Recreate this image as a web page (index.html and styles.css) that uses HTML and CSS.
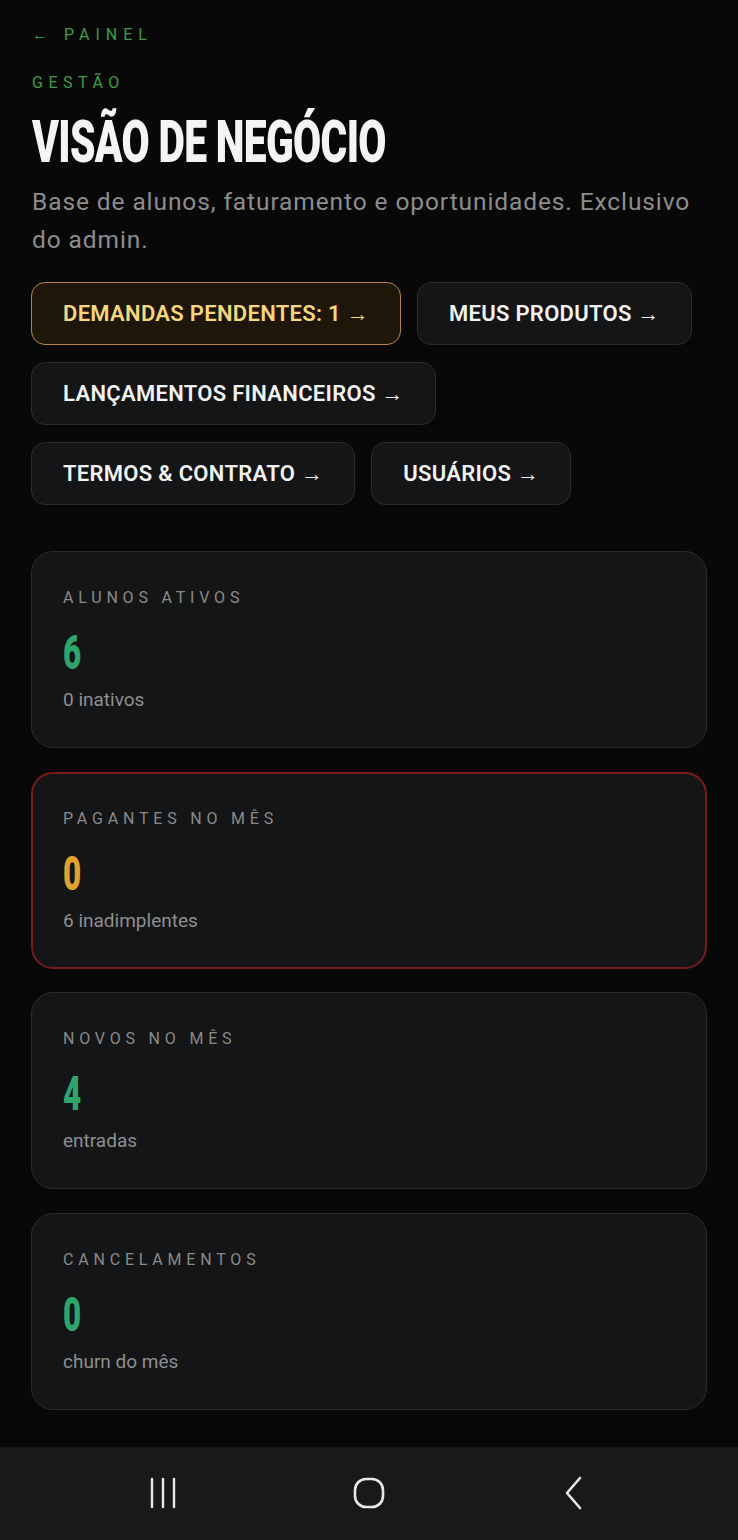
FILE: index.html
```html
<!DOCTYPE html>
<html lang="pt-BR">
<head>
  <meta charset="UTF-8">
  <title>Visão de Negócio</title>
  <link rel="stylesheet" href="styles.css">
</head>
<body>
  <div class="page">
    <a class="back" href="#">← PAINEL</a>
    <div class="eyebrow">GESTÃO</div>
    <h1><span>VISÃO DE NEGÓCIO</span></h1>
    <p class="lead">Base de alunos, faturamento e oportunidades. Exclusivo do admin.</p>

    <div class="actions">
      <a class="btn btn-warn" href="#">DEMANDAS PENDENTES: 1 →</a>
      <a class="btn" href="#">MEUS PRODUTOS →</a>
      <a class="btn" href="#">LANÇAMENTOS FINANCEIROS →</a>
      <a class="btn" href="#">TERMOS &amp; CONTRATO →</a>
      <a class="btn" href="#">USUÁRIOS →</a>
    </div>

    <div class="cards">
      <div class="card">
        <div class="card-label">ALUNOS ATIVOS</div>
        <div class="card-value green"><span>6</span></div>
        <div class="card-sub">0 inativos</div>
      </div>
      <div class="card card-alert">
        <div class="card-label">PAGANTES NO MÊS</div>
        <div class="card-value amber"><span>0</span></div>
        <div class="card-sub">6 inadimplentes</div>
      </div>
      <div class="card">
        <div class="card-label">NOVOS NO MÊS</div>
        <div class="card-value green"><span>4</span></div>
        <div class="card-sub">entradas</div>
      </div>
      <div class="card">
        <div class="card-label">CANCELAMENTOS</div>
        <div class="card-value green"><span>0</span></div>
        <div class="card-sub">churn do mês</div>
      </div>
    </div>
  </div>

  <div class="navbar">
    <svg width="34" height="34" viewBox="0 0 34 34" fill="none" stroke="#e8e8e8" stroke-width="2.4" stroke-linecap="round">
      <path d="M6 3v28M17 3v28M28 3v28"/>
    </svg>
    <svg width="34" height="34" viewBox="0 0 34 34" fill="none" stroke="#e8e8e8" stroke-width="2.6">
      <rect x="3" y="3" width="28" height="28" rx="11"/>
    </svg>
    <svg width="34" height="34" viewBox="0 0 34 34" fill="none" stroke="#e8e8e8" stroke-width="2.6" stroke-linecap="round" stroke-linejoin="round">
      <path d="M22 2L9 17l13 15"/>
    </svg>
  </div>
</body>
</html>
```

FILE: styles.css
```css
* {
  box-sizing: border-box;
}
body {
  margin: 0;
  background: #080808;
  font-family: Roboto, "Liberation Sans", sans-serif;
  color: #f2f2f2;
}
.page {
  padding: 23px 31px 37px 31px;
}
.back {
  display: block;
  padding-left: 1px;
  color: #3f9c47;
  text-decoration: none;
  font-size: 16px;
  letter-spacing: 6px;
  line-height: 24px;
}
.eyebrow {
  margin-top: 24px;
  padding-left: 1px;
  color: #3f9c47;
  font-size: 16px;
  letter-spacing: 5.5px;
  line-height: 24px;
}
h1 {
  margin: 20px 0 0;
  height: 54px;
  padding-left: 1px;
  font-size: 60px;
  line-height: 54px;
  font-weight: 900;
  color: #f4f4f2;
  white-space: nowrap;
}
h1 span {
  display: inline-block;
  transform: scaleX(0.68);
  transform-origin: left center;
  letter-spacing: -1px;
}
.lead {
  margin: 14px 0 0;
  padding-left: 1px;
  font-size: 24.5px;
  line-height: 38px;
  letter-spacing: 0.9px;
  color: #8d8d8d;
}
.actions {
  display: flex;
  flex-wrap: wrap;
  gap: 17px 16px;
  margin-top: 23px;
}
.btn {
  display: inline-flex;
  align-items: center;
  height: 63px;
  padding: 0 31px;
  background: #141517;
  border: 1px solid #2a2b2e;
  border-radius: 14px;
  color: #f2f2f2;
  text-decoration: none;
  font-size: 22px;
  font-weight: 600;
  letter-spacing: 0.3px;
}
.btn-warn {
  background: #1d1609;
  border-color: #b8873e;
  color: #f6d77c;
}
.cards {
  display: flex;
  flex-direction: column;
  gap: 23.5px;
  margin-top: 46px;
}
.card {
  height: 197px;
  padding: 34px 31px 0;
  background: #141517;
  border: 1px solid #2a2b2e;
  border-radius: 22px;
}
.card-alert {
  border: 2px solid #7a1a1e;
  padding: 33px 30px 0;
}
.card-label {
  font-size: 16px;
  letter-spacing: 4.8px;
  color: #8a8a8a;
  line-height: 24px;
}
.card-value {
  margin-top: 21px;
  height: 44px;
  font-size: 49px;
  line-height: 44px;
  font-weight: 900;
}
.card-value span {
  display: inline-block;
  transform: scaleX(0.64);
  transform-origin: left center;
}
.green {
  color: #2ea56a;
}
.amber {
  color: #e0a12f;
}
.card-sub {
  margin-top: 12px;
  font-size: 19px;
  line-height: 26px;
  color: #8f8f8f;
}
.navbar {
  height: 93px;
  background: #19191b;
  display: flex;
  justify-content: center;
  align-items: center;
  gap: 172px;
}
```
